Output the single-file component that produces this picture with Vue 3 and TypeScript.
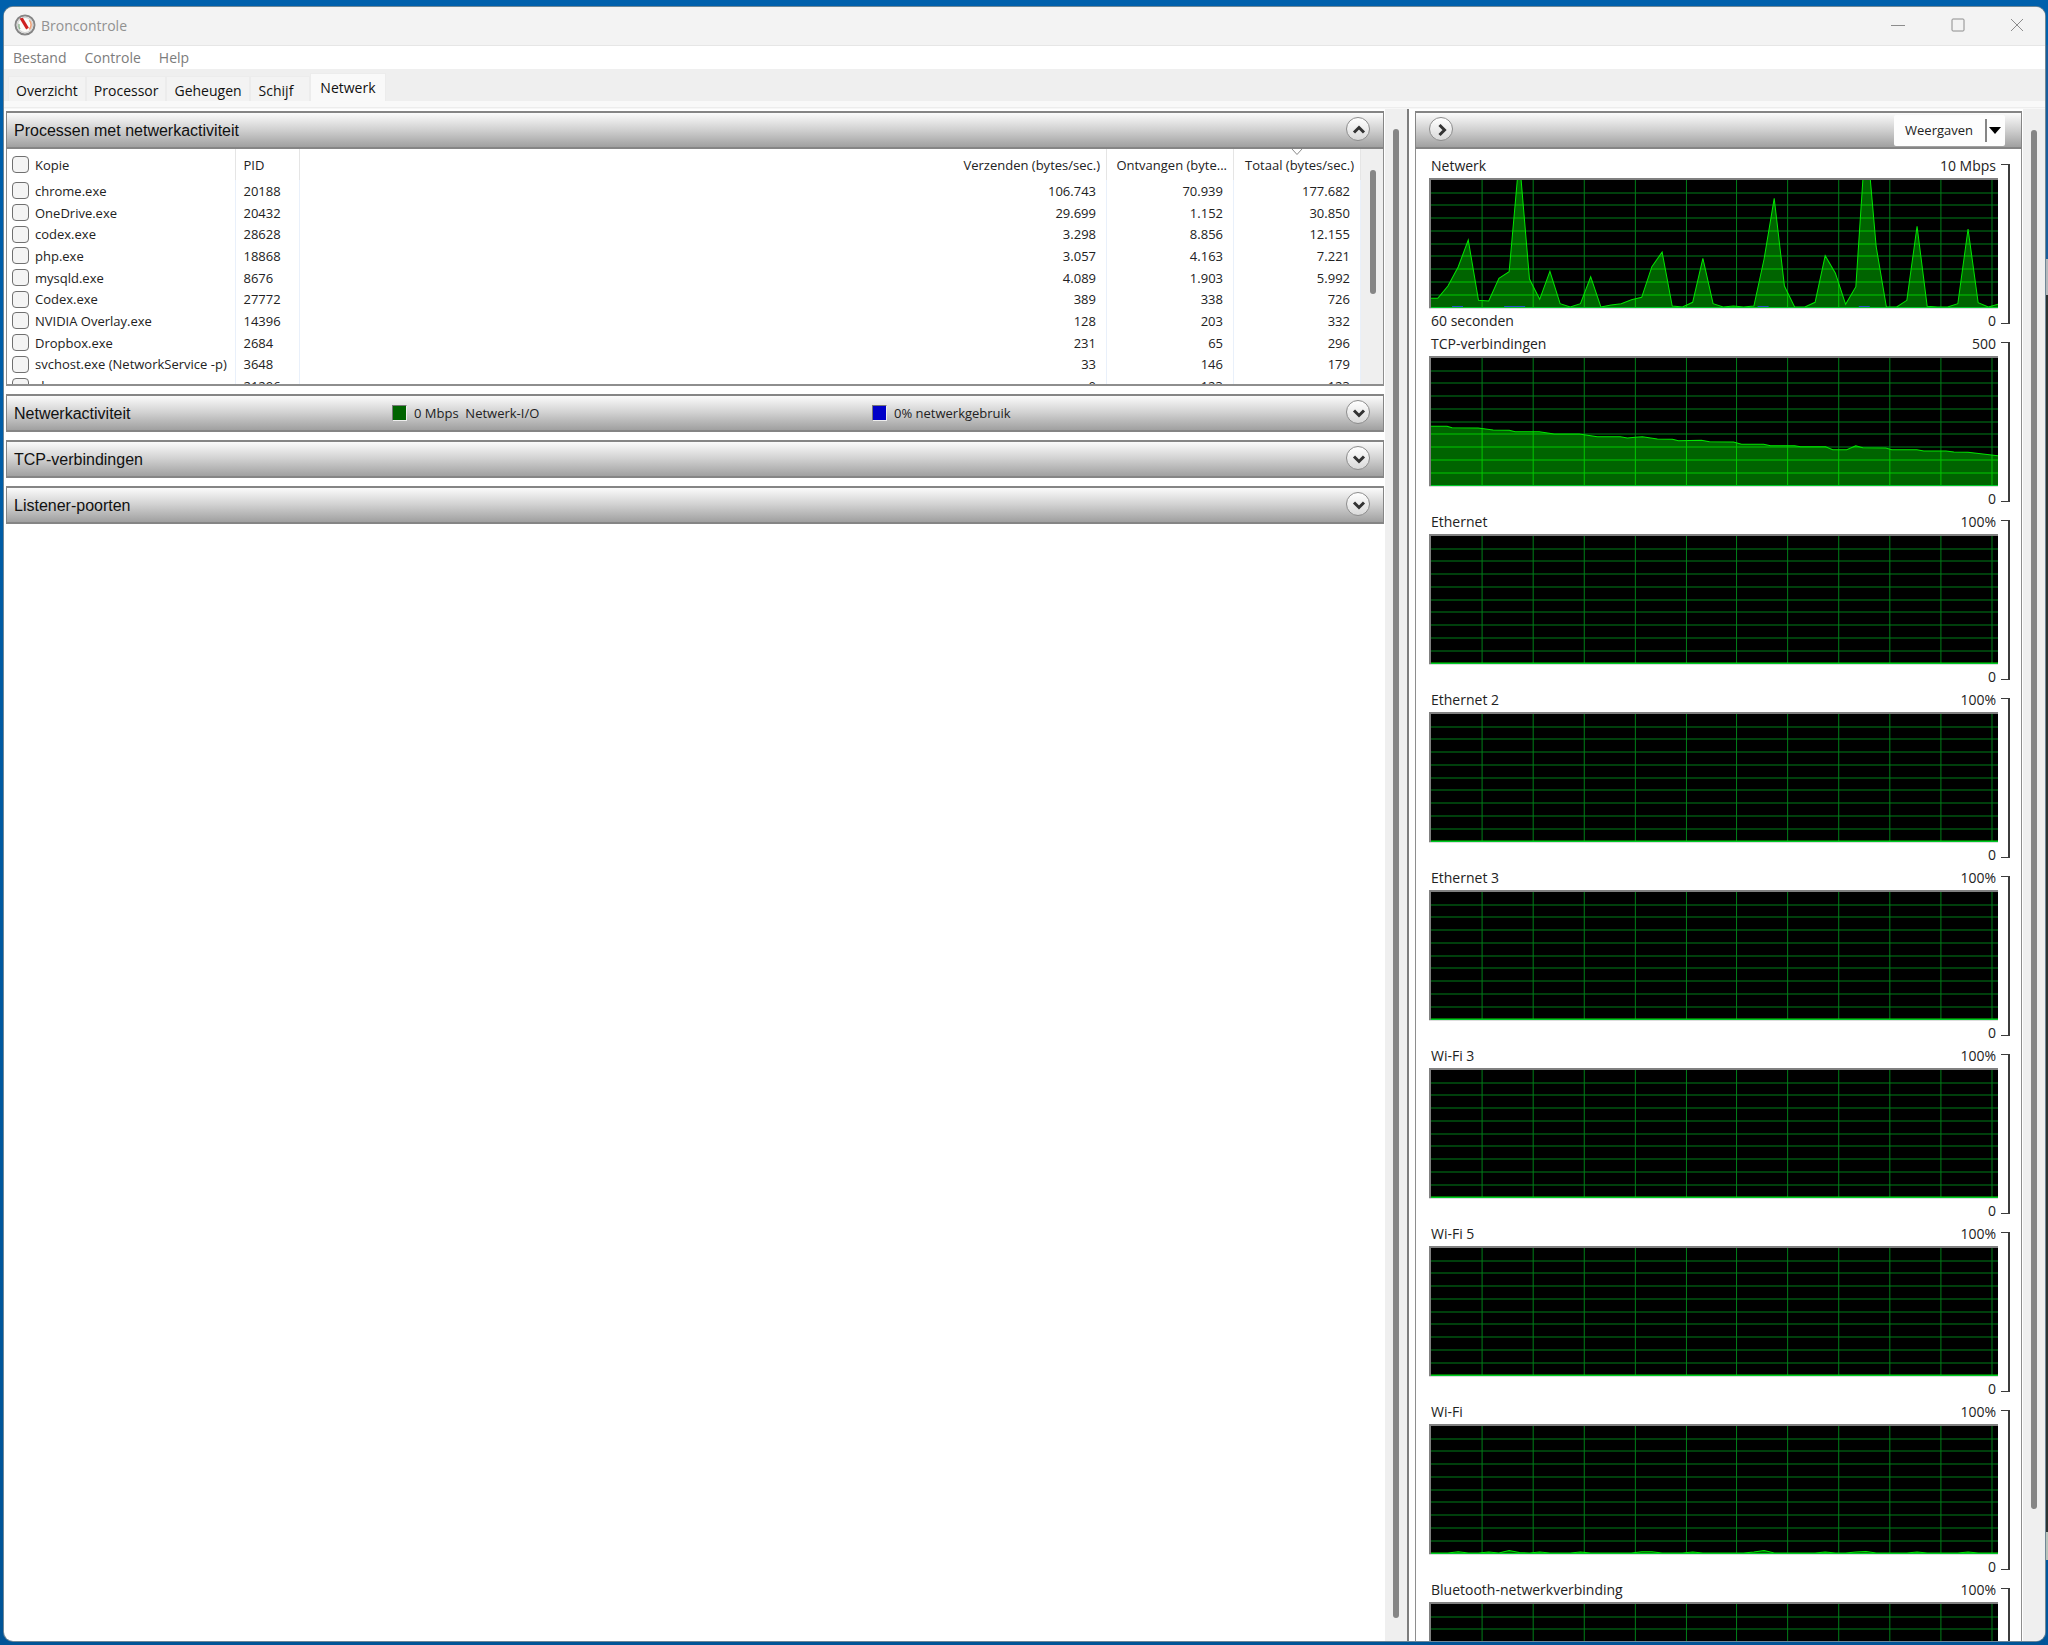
<script setup lang="ts">
interface ProcessRow {
  name: string
  pid: string
  sent: string
  received: string
  total: string
}

type Point = [number, number]

interface Chart {
  id: string
  title: string
  max: string
  caption: string
  points: Point[]
  usage: number[]
}

const PLOT_WIDTH = 566
const PLOT_HEIGHT = 127

const tabs: string[] = ['Overzicht', 'Processor', 'Geheugen', 'Schijf', 'Netwerk']

const processes: ProcessRow[] = [
  { name: 'chrome.exe', pid: '20188', sent: '106.743', received: '70.939', total: '177.682' },
  { name: 'OneDrive.exe', pid: '20432', sent: '29.699', received: '1.152', total: '30.850' },
  { name: 'codex.exe', pid: '28628', sent: '3.298', received: '8.856', total: '12.155' },
  { name: 'php.exe', pid: '18868', sent: '3.057', received: '4.163', total: '7.221' },
  { name: 'mysqld.exe', pid: '8676', sent: '4.089', received: '1.903', total: '5.992' },
  { name: 'Codex.exe', pid: '27772', sent: '389', received: '338', total: '726' },
  { name: 'NVIDIA Overlay.exe', pid: '14396', sent: '128', received: '203', total: '332' },
  { name: 'Dropbox.exe', pid: '2684', sent: '231', received: '65', total: '296' },
  { name: 'svchost.exe (NetworkService -p)', pid: '3648', sent: '33', received: '146', total: '179' },
  { name: 'chrome.exe', pid: '21296', sent: '0', received: '123', total: '123' },
]

// One sample per second; the newest sample sits at the right edge.
const samples = (values: number[]): Point[] => [
  [0, values[0]],
  ...values.map((v, i): Point => [6.7 + i * 10.18, v]),
]

const network = samples([
  8.7, 21, 40, 67, 6.7, 6, 28.7, 35.3, 149, 28, 7.7, 35.7, 3.3, 0, 3.3, 30.3, 0, 2, 3.3, 7.3, 9.7,
  40.3, 55, 1, 0, 4.7, 48.7, 3.3, 0, 1, 0, 1, 48, 108.7, 21, 0, 0, 4.7, 51.3, 33.7, 2.7, 20.3, 176,
  60.3, 0, 0, 6.7, 80.7, 0.7, 0, 0, 3.3, 78, 4.3, 0, 3,
])

const tcp: Point[] = [
  [0, 58.7], [16, 58.7], [21, 57.3], [47, 57], [62, 55], [78, 54.7], [84, 53.3], [108, 53.3],
  [123, 51], [148, 51], [166, 48.3], [189, 48.3], [196, 47], [204, 47.7], [211, 48.3], [226, 46],
  [241, 45.7], [247, 44.3], [270, 44.7], [278, 43.3], [302, 43], [310, 40.7], [332, 40.7],
  [339, 39.3], [363, 39.3], [369, 38.3], [394, 38.3], [401, 35.3], [415, 35.3], [424, 39.3],
  [431, 37.3], [454, 37], [460, 35.3], [485, 35.3], [492, 34], [514, 34], [522, 33], [536, 32.7],
  [566, 29.3],
]

const wifi = samples([
  0, 0, 1.2, 0, 0, 1, 0, 2.5, 0.5, 0, 1, 0, 0, 0, 1, 0, 0, 0, 0, 0, 1.2, 1.2, 0, 0, 0, 1, 0, 0, 0, 0,
  0, 1, 2.5, 0, 0, 0, 0, 0, 1, 0, 0, 1, 1.5, 0, 0, 0, 0, 1, 0, 0, 0, 0, 1, 0, 0, 0,
])

const idle: Point[] = [[0, 0], [PLOT_WIDTH, 0]]

const chart = (
  id: string,
  title: string,
  max = '100%',
  points: Point[] = idle,
  caption = '',
  usage: number[] = [],
): Chart => ({ id, title, max, caption, points, usage })

const charts: Chart[] = [
  chart('network', 'Netwerk', '10 Mbps', network, '60 seconden', [26, 78, 88, 331, 432]),
  chart('tcp', 'TCP-verbindingen', '500', tcp),
  chart('ethernet', 'Ethernet'),
  chart('ethernet-2', 'Ethernet 2'),
  chart('ethernet-3', 'Ethernet 3'),
  chart('wifi-3', 'Wi-Fi 3'),
  chart('wifi-5', 'Wi-Fi 5'),
  chart('wifi', 'Wi-Fi', '100%', wifi),
  chart('bluetooth', 'Bluetooth-netwerkverbinding'),
]

const linePoints = (points: Point[]): string =>
  points.map(([x, y]) => `${x.toFixed(1)},${(PLOT_HEIGHT - y).toFixed(1)}`).join(' ')

const areaPoints = (points: Point[]): string =>
  `0,${PLOT_HEIGHT} ${linePoints(points)} ${PLOT_WIDTH},${PLOT_HEIGHT}`

const gridPath = [
  ...Array.from({ length: 11 }, (_, i) => `M${Math.round((i + 1) * 50.9)} 0V${PLOT_HEIGHT}`),
  ...Array.from({ length: 9 }, (_, i) => `M0 ${Math.round((i + 1) * 12.73)}H${PLOT_WIDTH}`),
].join('')
</script>

<template>
  <div class="desktop">
    <main class="window">
      <header class="titlebar">
        <svg class="app-icon" viewBox="0 0 22 22" aria-hidden="true">
          <circle cx="11" cy="11" r="9.5" fill="#fbfbf9" stroke="#858585" stroke-width="2" />
          <circle cx="11" cy="11" r="7.6" fill="none" stroke="#d4d4d4" stroke-width="1.4" />
          <path d="M6 15a6.400 6.400 0 0 1-1-5" fill="none" stroke="#8fb58f" stroke-width="1.500" />
          <path d="M15.200 6.200a6.400 6.400 0 0 1 0 9.200" fill="none" stroke="#f0a37a" stroke-width="1.600" />
          <path d="M5.600 4.600l3.200-.8 6 10-2.600 1.800z" fill="#cf1f1f" />
        </svg>
        <h1>Broncontrole</h1>
        <div class="caption-buttons">
          <button type="button" aria-label="Minimaliseren">
            <svg viewBox="0 0 14 14"><path d="M0 7.500h14" /></svg>
          </button>
          <button type="button" aria-label="Maximaliseren">
            <svg viewBox="0 0 14 14"><rect x="1" y="1" width="12" height="12" rx="1" /></svg>
          </button>
          <button type="button" aria-label="Sluiten">
            <svg viewBox="0 0 14 14"><path d="M1 1l12 12M13 1L1 13" /></svg>
          </button>
        </div>
      </header>

      <nav class="menubar">
        <button type="button">Bestand</button>
        <button type="button">Controle</button>
        <button type="button">Help</button>
      </nav>

      <div class="tabs" role="tablist">
        <button
          v-for="tab in tabs"
          :key="tab"
          type="button"
          role="tab"
          :class="{ active: tab === 'Netwerk' }"
          :aria-selected="tab === 'Netwerk'"
        >{{ tab }}</button>
      </div>
      <div class="tab-edge"></div>

      <div class="body">
        <section class="details">
          <div class="panels">
            <article class="panel">
              <div class="bar">
                <h2>Processen met netwerkactiviteit</h2>
                <button type="button" class="round" aria-label="Samenvouwen">
                  <svg viewBox="0 0 24 24"><path d="M7 14.500l5-5 5 5" /></svg>
                </button>
              </div>
              <div class="table-wrap">
                <table>
                  <colgroup>
                    <col class="c-name" /><col class="c-pid" /><col /><col class="c-num" /><col class="c-num" />
                  </colgroup>
                  <thead>
                    <tr>
                      <th><label><input type="checkbox" />Kopie</label></th>
                      <th>PID</th>
                      <th class="num">Verzenden (bytes/sec.)</th>
                      <th class="num">Ontvangen (byte...</th>
                      <th class="num sorted">
                        Totaal (bytes/sec.)
                        <svg class="sort" viewBox="0 0 12 7"><path d="M1 0l5 5.500L11 0" /></svg>
                      </th>
                    </tr>
                  </thead>
                  <tbody>
                    <tr v-for="p in processes" :key="p.pid">
                      <td><label><input type="checkbox" />{{ p.name }}</label></td>
                      <td>{{ p.pid }}</td>
                      <td class="num">{{ p.sent }}</td>
                      <td class="num">{{ p.received }}</td>
                      <td class="num">{{ p.total }}</td>
                    </tr>
                  </tbody>
                </table>
                <div class="table-scroll"><div class="thumb"></div></div>
              </div>
            </article>

            <article class="panel">
              <div class="bar">
                <h2>Netwerkactiviteit</h2>
                <p class="legend io"><i class="swatch green"></i>0 Mbps&nbsp; Netwerk-I/O</p>
                <p class="legend"><i class="swatch blue"></i>0% netwerkgebruik</p>
                <button type="button" class="round" aria-label="Uitvouwen">
                  <svg viewBox="0 0 24 24"><path d="M7 9.500l5 5 5-5" /></svg>
                </button>
              </div>
            </article>

            <article v-for="title in ['TCP-verbindingen', 'Listener-poorten']" :key="title" class="panel">
              <div class="bar">
                <h2>{{ title }}</h2>
                <button type="button" class="round" aria-label="Uitvouwen">
                  <svg viewBox="0 0 24 24"><path d="M7 9.500l5 5 5-5" /></svg>
                </button>
              </div>
            </article>
          </div>
          <div class="scrollbar left"><div class="thumb"></div></div>
        </section>

        <aside class="graphs">
          <div class="graph-column">
            <div class="bar">
              <button type="button" class="round" aria-label="Grafieken verbergen">
                <svg viewBox="0 0 24 24"><path d="M9.500 7l5 5-5 5" /></svg>
              </button>
              <button type="button" class="views">
                Weergaven
                <span class="drop"><svg viewBox="0 0 12 7"><path d="M0 0h12L6 7z" /></svg></span>
              </button>
            </div>

            <div class="chart-list">
              <figure v-for="c in charts" :key="c.id" class="chart">
                <div class="chart-main">
                  <figcaption><span>{{ c.title }}</span><span>{{ c.max }}</span></figcaption>
                  <div class="plot">
                    <svg :viewBox="`0 0 ${PLOT_WIDTH} ${PLOT_HEIGHT}`" preserveAspectRatio="none">
                      <defs>
                        <clipPath :id="`area-${c.id}`"><polygon :points="areaPoints(c.points)" /></clipPath>
                      </defs>
                      <path class="grid" :d="gridPath" />
                      <g :clip-path="`url(#area-${c.id})`">
                        <rect class="fill" :width="PLOT_WIDTH" :height="PLOT_HEIGHT" />
                        <path class="grid lit" :d="gridPath" />
                      </g>
                      <polyline class="line" :points="linePoints(c.points)" />
                      <rect
                        v-for="x in c.usage"
                        :key="x"
                        class="usage"
                        :x="x - 5"
                        :y="PLOT_HEIGHT - 1"
                        width="11"
                        height="1"
                      />
                    </svg>
                  </div>
                  <div class="chart-foot"><span>{{ c.caption }}</span><span>0</span></div>
                </div>
                <div class="bracket"></div>
              </figure>
            </div>
          </div>
          <div class="scrollbar right"><div class="thumb"></div></div>
        </aside>
      </div>
    </main>
  </div>
</template>

<style>
html,
body,
#app {
  height: 100%;
}

body {
  margin: 0;
  overflow: hidden;
}
</style>

<style scoped>
* {
  box-sizing: border-box;
}

h1,
h2,
p,
figure {
  margin: 0;
  font-weight: 400;
}

button {
  margin: 0;
  padding: 0;
  border: 0;
  background: none;
  color: inherit;
  font: inherit;
}

.desktop {
  height: 100vh;
  padding: 7px 3px 4px 4px;
  background:
    linear-gradient(#0060ac 0 45px, #195d9c 45px 259px, #b5b9bd 259px 295px, #2c3333 295px 1532px, #b9c4bc 1532px 1560px, #00569c 1560px)
      right top / 3px 100% no-repeat,
    linear-gradient(#0060ac, #005497);
  font-family: "Open Sans", "Noto Sans", sans-serif;
  font-size: 13px;
  color: #222;
}

.window {
  display: flex;
  flex-direction: column;
  height: 100%;
  border-radius: 9px;
  overflow: hidden;
  background: #fff;
  box-shadow: 0 0 0 1px #6f8796;
}

.titlebar {
  display: flex;
  flex: none;
  align-items: center;
  height: 39px;
  padding: 0 0 2px 10px;
  border-bottom: 1px solid #e6e6e6;
  background: #f3f3f3;
}

.app-icon {
  width: 22px;
  height: 22px;
}

h1 {
  margin-left: 5px;
  font-size: 14px;
  color: #919191;
}

.caption-buttons {
  display: flex;
  height: 36px;
  margin-left: auto;
}

.caption-buttons button {
  display: grid;
  place-items: center;
  width: 60px;
}

.caption-buttons button:last-child {
  width: 57px;
}

.caption-buttons svg {
  width: 14px;
  height: 14px;
  fill: none;
  stroke: #8c8c8c;
  stroke-width: 1;
}

.menubar {
  display: flex;
  flex: none;
  gap: 18px;
  height: 23px;
  padding-left: 9px;
  font-size: 14px;
  color: #7c7c7c;
}

.tabs {
  display: flex;
  flex: none;
  align-items: flex-end;
  height: 32px;
  padding-left: 4px;
  background: #efefef;
  font-size: 14px;
  color: #111;
}

.tabs button {
  height: 25px;
  padding: 2px 7px 0;
  border: 1px solid #ececec;
  border-bottom: 0;
  background: #f3f3f3;
}

.tabs button:nth-child(4) {
  padding: 2px 16px 0 8px;
}

.tabs .active {
  height: 28px;
  padding: 0 9px;
  background: #f9f9f9;
}

.tab-edge {
  flex: none;
  height: 8px;
  background: linear-gradient(#f9f9f9 0 6px, #ededed 6px 7px, #f7f7f7 7px);
}

.body {
  display: flex;
  flex: 1;
  min-height: 0;
}

.details {
  display: flex;
  flex: 1;
  min-width: 0;
  border-right: 2px solid #7d7d7d;
}

.panels {
  display: flex;
  flex: 1;
  flex-direction: column;
  gap: 8px;
  min-width: 0;
  padding: 2px 1px 0 2px;
}

.bar {
  display: flex;
  align-items: center;
  height: 38px;
  padding: 0 13px 0 7px;
  border: 1px solid #858585;
  border-top-width: 2px;
  border-bottom-width: 2px;
  background: linear-gradient(#fbfbfb, #d0d0d0 50%, #a0a0a0);
}

h2 {
  padding-top: 2px;
  font-family: "Liberation Sans", Arial, sans-serif;
  font-size: 16px;
  color: #111;
}

.panel:nth-child(2) h2 {
  width: 378px;
}

.round {
  display: grid;
  flex: none;
  place-items: center;
  width: 24px;
  height: 24px;
  margin: 0 0 2px auto;
  border: 1px solid #8d8d8d;
  border-radius: 50%;
  background: linear-gradient(#fff, #d9d9d9);
}

.round svg {
  width: 24px;
  height: 24px;
  fill: none;
  stroke: #333;
  stroke-width: 3;
}

.legend {
  display: flex;
  align-items: center;
  gap: 7px;
}

.legend.io {
  width: 480px;
}

.swatch {
  width: 15px;
  height: 16px;
  border: 1px solid #777;
  border-right-color: #eee;
  border-bottom-color: #eee;
}

.green {
  background: #006400;
}

.blue {
  background: #0000c8;
}

.table-wrap {
  display: flex;
  height: 237px;
  overflow: hidden;
  border: solid #8e8e8e;
  border-width: 0 1px 2px;
}

table {
  flex: 1;
  height: 248px;
  table-layout: fixed;
  border-collapse: collapse;
}

.c-name {
  width: 228px;
}

.c-pid {
  width: 64px;
}

.c-num {
  width: 127px;
}

th,
td {
  padding: 0 8px;
  border-right: 1px solid #e9f0fa;
  text-align: left;
  font-weight: 400;
  white-space: nowrap;
}

th {
  height: 31px;
  border-right-color: #e5e5e5;
}

th:nth-child(n + 3) {
  padding-right: 6px;
}

td.num {
  padding-right: 10px;
}

th:first-child,
td:first-child {
  padding: 0 0 0 5px;
}

.num {
  text-align: right;
}

.sorted {
  position: relative;
}

.sort {
  position: absolute;
  top: 0;
  left: calc(50% - 6px);
  width: 12px;
  height: 7px;
  fill: none;
  stroke: #888;
}

label {
  display: flex;
  align-items: center;
  gap: 6px;
}

input {
  flex: none;
  width: 17px;
  height: 17px;
  margin: 0;
  appearance: none;
  border: 1px solid #707070;
  border-radius: 4px;
  background: #f4f4f4;
}

.table-scroll {
  flex: 0 0 22px;
  padding: 21px 6px 0 9px;
  background: #efefef;
}

.thumb {
  border-radius: 3px;
  background: #868686;
}

.table-scroll .thumb {
  width: 6px;
  height: 124px;
}

.scrollbar {
  flex: none;
  width: 22px;
  padding: 20px 8px 23px;
  background: #efefef;
}

.scrollbar.right {
  padding: 21px 8px 132px;
}

.scrollbar .thumb {
  width: 6px;
  height: 100%;
}

.graphs {
  display: flex;
  flex: 0 0 636px;
  padding-left: 6px;
}

.graph-column {
  display: flex;
  flex: 1;
  flex-direction: column;
  min-width: 0;
  margin-right: 1px;
  padding-top: 2px;
}

.graph-column .bar {
  flex: none;
  padding: 0 16px 0 13px;
}

.graph-column .round {
  margin: 0 0 2px;
}

.views {
  display: flex;
  align-items: center;
  gap: 12px;
  height: 31px;
  margin-left: auto;
  padding: 0 4px 0 11px;
  border-radius: 2px;
  background: #fdfdfd;
}

.drop {
  display: flex;
  align-items: center;
  height: 23px;
  padding-left: 2px;
  border-left: 2px solid #858585;
}

.drop svg {
  width: 12px;
  height: 7px;
  fill: #000;
}

.chart-list {
  flex: 1;
  min-height: 0;
  overflow: hidden;
  padding: 6px 11px 0 13px;
  border: solid #8e8e8e;
  border-width: 0 1px;
  font-size: 14px;
}

.chart {
  display: flex;
  gap: 3px;
  height: 178px;
}

.chart-main {
  flex: 1;
  min-width: 0;
}

figcaption,
.chart-foot {
  display: flex;
  align-items: center;
  justify-content: space-between;
  height: 23px;
  padding: 0 2px 2px;
}

.chart-foot {
  height: 25px;
  padding-bottom: 0;
}

.plot {
  height: 130px;
  border: solid #808080;
  border-width: 2px 0 0 2px;
  box-shadow: 0 1px 0 #ddd;
  background: #000;
}

.plot svg {
  display: block;
  width: 100%;
  height: 100%;
  border-bottom: 1px solid #00c828;
}

.grid {
  fill: none;
  stroke: #007e18;
  stroke-width: 1;
}

.grid.lit {
  stroke: #00c800;
}

.fill {
  fill: #006400;
}

.line {
  fill: none;
  stroke: #00e600;
  stroke-width: 1;
}

.usage {
  fill: #2850c8;
}

.bracket {
  width: 9px;
  height: 160px;
  margin-top: 9px;
  border: solid #3c3c3c;
  border-width: 1px 2px 1px 0;
}
</style>
